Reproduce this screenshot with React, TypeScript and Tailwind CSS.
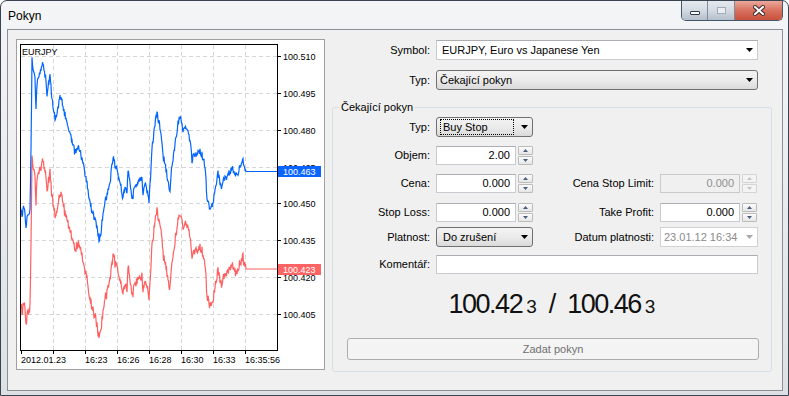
import React from 'react';

// Chart data: key points of the ask line in page coords (x, y)
const blueKeys: [number, number][] = [
  [20, 208], [22, 215], [24, 205], [26, 225], [28, 212], [30, 210], [31, 150], [32, 57], [33, 70], [35, 80],
  [36, 108], [37, 85], [39, 75], [41, 68], [43, 62], [44, 72], [46, 80], [47, 95], [48, 85], [50, 77],
  [52, 100], [54, 110], [55, 118], [57, 112], [60, 98], [62, 102], [65, 115], [68, 125], [72, 140], [75, 153],
  [78, 148], [80, 150], [82, 160], [85, 173], [88, 190], [90, 203], [92, 212], [95, 220], [97, 227], [99, 240],
  [101, 232], [102, 223], [104, 205], [107, 195], [110, 183], [112, 165], [113, 157], [115, 165], [117, 170], [118, 177],
  [121, 188], [123, 198], [125, 185], [127, 190], [128, 168], [130, 180], [132, 202], [134, 190], [137, 187], [140, 180],
  [142, 177], [143, 192], [145, 185], [147, 190], [149, 202], [150, 185], [152, 150], [153, 140], [155, 125], [157, 110],
  [158, 118], [160, 127], [162, 140], [163, 157], [165, 163], [167, 175], [170, 190], [171, 175], [173, 160], [175, 143],
  [177, 130], [179, 118], [180, 115], [182, 125], [183, 133], [185, 128], [187, 130], [189, 135], [190, 140], [192, 160],
  [194, 155], [197, 153], [200, 152], [202, 155], [204, 162], [205, 167], [207, 197], [210, 210], [212, 205], [213, 203],
  [215, 190], [217, 180], [218, 172], [220, 183], [222, 187], [224, 178], [227, 177], [230, 172], [233, 168], [235, 175],
  [238, 177], [240, 165], [243, 160], [244, 168], [246, 171.5],
];

function interp(keys: [number, number][], x: number) {
  for (let i = 0; i < keys.length - 1; i++) {
    const [x0, y0] = keys[i];
    const [x1, y1] = keys[i + 1];
    if (x >= x0 && x <= x1) return y0 + ((y1 - y0) * (x - x0)) / (x1 - x0 || 1);
  }
  return keys[keys.length - 1][1];
}

let seed = 12345;
const rnd = () => {
  seed = (seed * 16807) % 2147483647;
  return seed / 2147483647;
};

const bluePts: string[] = [];
const redPts: string[] = [];
for (let x = 20.5; x <= 246; x += 0.5) {
  const last = x >= 246;
  const b = last ? 171.5 : interp(blueKeys, x) + (rnd() - 0.5) * 7;
  const r = last ? 269 : Math.min(349, b + 97 + (rnd() - 0.5) * 6);
  bluePts.push(`${x},${b.toFixed(1)}`);
  redPts.push(`${x},${r.toFixed(1)}`);
}
bluePts.push('277,171.5');
redPts.push('277,269');

const priceLevels = ['100.510', '100.495', '100.480', '100.465', '100.450', '100.435', '100.420', '100.405'];
const gridY = priceLevels.map((_, i) => Math.round(56 + i * 36.86));
const gridX = [53, 85, 117, 149, 181, 213, 245];
const times: [number, string][] = [
  [21, '2012.01.23'],
  [85, '16:23'],
  [117, '16:26'],
  [149, '16:28'],
  [181, '16:30'],
  [213, '16:33'],
  [245, '16:35:56'],
];

const chartFont = 'Liberation Sans, Arial, sans-serif';

const Chart = () => (
  <div className="h-[331px] w-[309px] border border-[#a0a0a0] bg-white">
    <svg width="307" height="329" viewBox="17 40 307 329">
      {/* grid */}
      {gridY.map((y) => (
        <line key={`h${y}`} x1="21" x2="277" y1={y + 0.5} y2={y + 0.5} stroke="#d6d6d6" strokeDasharray="4 3" />
      ))}
      {gridX.map((x) => (
        <line key={`v${x}`} x1={x + 0.5} x2={x + 0.5} y1="45" y2="350" stroke="#d6d6d6" strokeDasharray="4 3" />
      ))}

      {/* price lines */}
      <polyline points={redPts.join(' ')} fill="none" stroke="#ff5f5f" strokeWidth="1.2" />
      <polyline points={bluePts.join(' ')} fill="none" stroke="#0064ff" strokeWidth="1.2" />

      {/* frame */}
      <rect x="20.5" y="44.5" width="257" height="306" fill="none" stroke="#000" />

      {/* price axis */}
      {gridY.map((y, i) => (
        <g key={`p${y}`}>
          <line x1="277" x2="281" y1={y + 0.5} y2={y + 0.5} stroke="#000" />
          <text x="283" y={y + 3.5} fontFamily={chartFont} fontSize="9" fill="#000">
            {priceLevels[i]}
          </text>
        </g>
      ))}

      {/* time axis */}
      <line x1="21.5" x2="21.5" y1="350" y2="354" stroke="#000" />
      {gridX.map((x) => (
        <line key={`t${x}`} x1={x + 0.5} x2={x + 0.5} y1="350" y2="354" stroke="#000" />
      ))}
      {times.map(([x, t]) => (
        <text key={t} x={x} y="363" fontFamily={chartFont} fontSize="9" fill="#000">
          {t}
        </text>
      ))}

      <text x="22" y="54.5" fontFamily={chartFont} fontSize="9" fill="#000">
        EURJPY
      </text>

      {/* current ask / bid tags */}
      <rect x="278" y="166" width="43" height="11" fill="#0a64ff" />
      <text x="283" y="175" fontFamily={chartFont} fontSize="9" fill="#fff">
        100.463
      </text>
      <rect x="278" y="264" width="43" height="11" fill="#ff6464" />
      <text x="283" y="273" fontFamily={chartFont} fontSize="9" fill="#fff">
        100.423
      </text>
    </svg>
  </div>
);

const Arrow = ({ color = '#000' }: { color?: string }) => (
  <svg width="7" height="4" viewBox="0 0 7 4">
    <path d="M0 0H7L3.5 4Z" fill={color} />
  </svg>
);

const Spinner = ({ disabled }: { disabled?: boolean }) => {
  const c = disabled ? '#c4c4c4' : '#4a5d7e';
  const box = disabled
    ? 'flex h-[9px] w-[15px] items-center justify-center rounded-[1px] border border-[#d4d4d4] bg-[#f4f4f4]'
    : 'flex h-[9px] w-[15px] items-center justify-center rounded-[1px] border border-[#bcbcbc] bg-gradient-to-b from-[#fcfcfc] to-[#e6e6e6]';
  return (
    <div className="flex h-[19px] flex-col gap-[1px]">
      <div className={box}>
        <svg width="5" height="3" viewBox="0 0 5 3">
          <path d="M2.5 0L5 3H0Z" fill={c} />
        </svg>
      </div>
      <div className={box}>
        <svg width="5" height="3" viewBox="0 0 5 3">
          <path d="M0 0H5L2.5 3Z" fill={c} />
        </svg>
      </div>
    </div>
  );
};

const NumField = ({ value, disabled }: { value: string; disabled?: boolean }) => (
  <div className="flex w-[97px] items-start gap-[2px]">
    <div
      className={
        disabled
          ? 'flex h-[19px] w-[80px] items-center justify-end border border-[#c9c9c9] bg-[#f0f0f0] pr-[5px] text-[#8e8e8e]'
          : 'flex h-[19px] w-[80px] items-center justify-end border border-[#c8ccd1] border-t-[#abadb3] bg-white pr-[5px]'
      }
    >
      {value}
    </div>
    <Spinner disabled={disabled} />
  </div>
);

const ComboBtn = ({ children, focus }: { children: React.ReactNode; focus?: boolean }) => (
  <div className="flex h-[20px] w-[97px] items-center justify-between rounded-[3px] border border-[#707070] bg-gradient-to-b from-[#f3f3f3] via-[#ebebeb] to-[#dadada] pl-[3px] pr-[4px]">
    {focus ? (
      <span className="flex h-[16px] w-[74px] items-center border border-dotted border-black pl-[2px]">{children}</span>
    ) : (
      <span className="pl-[3px]">{children}</span>
    )}
    <Arrow />
  </div>
);

const Label = ({ children }: { children: React.ReactNode }) => (
  <span className="w-[97px] shrink-0 text-right">{children}</span>
);

const RightLabel = ({ children }: { children: React.ReactNode }) => (
  <span className="w-[121px] shrink-0 text-right">{children}</span>
);

const TitleButtons = () => (
  <div className="mr-[5px] flex h-[20px] overflow-hidden rounded-b-[5px] border border-t-0 border-[#45576b]">
    <div className="flex w-[26px] items-center justify-center border-r border-[#7d8c9b] bg-gradient-to-b from-[#e4e9ee] via-[#d3dae2] to-[#b4bfcb]">
      <div className="mt-[5px] h-[4px] w-[10px] rounded-[1px] border border-[#2d3946] bg-white" />
    </div>
    <div className="flex w-[27px] items-center justify-center border-r border-[#7d8c9b] bg-gradient-to-b from-[#e4e9ee] via-[#d3dae2] to-[#b4bfcb]">
      <div className="h-[7px] w-[9px] border border-[#a2acb8] bg-[#e9edf1]" />
    </div>
    <div className="flex w-[47px] items-center justify-center bg-gradient-to-b from-[#e9a99b] via-[#d7705f] to-[#c8503c]">
      <svg width="12" height="11" viewBox="0 0 12 11">
        <path d="M2 2L10 9M10 2L2 9" stroke="#3b2a2a" strokeWidth="4" strokeLinecap="square" />
        <path d="M2 2L10 9M10 2L2 9" stroke="#fff" strokeWidth="2" strokeLinecap="square" />
      </svg>
    </div>
  </div>
);

export default function App() {
  return (
    <div className={`h-[396px] w-[789px] ${"font-['Liberation_Sans',Arial,sans-serif]"} text-[11px] leading-[13px] text-black`}>
      <div className="flex h-full w-full flex-col rounded-t-[7px] border border-[#3a4450] bg-gradient-to-b from-[#f4f5f6] via-[#e9ebed] to-[#dde1e4]">
        {/* title bar */}
        <div className="flex h-[28px] shrink-0 items-start justify-between">
          <span className="mt-[8px] pl-[7px] text-[12px] leading-[14px]">Pokyn</span>
          <TitleButtons />
        </div>

        {/* client area */}
        <div className="ml-[6px] mr-[5px] flex h-[362px] border border-[#8a9096] bg-[#f0f0f0] pl-[8px] pt-[9px]">
          <Chart />

          <div className="ml-[7px] flex w-[440px] flex-col">
            <div className="mt-[1px] flex h-[20px] items-center">
              <span className="w-[98px] shrink-0 text-right">Symbol:</span>
              <div className="ml-[6px] flex h-[20px] w-[322px] items-center justify-between border border-[#c8ccd1] border-t-[#abadb3] bg-white pl-[5px] pr-[4px]">
                <span>EURJPY, Euro vs Japanese Yen</span>
                <Arrow />
              </div>
            </div>

            <div className="mt-[10px] flex h-[20px] items-center">
              <span className="w-[98px] shrink-0 text-right">Typ:</span>
              <div className="ml-[6px] flex h-[20px] w-[322px] items-center justify-between rounded-[3px] border border-[#707070] bg-gradient-to-b from-[#f3f3f3] via-[#ebebeb] to-[#dadada] pl-[3px] pr-[4px]">
                <span>Čekající pokyn</span>
                <Arrow />
              </div>
            </div>

            <fieldset className="mt-[11px] flex w-[440px] flex-col rounded-[3px] border border-[#d5dfe5] pb-[11px]">
              <legend className="ml-[6px] px-[2px] leading-[13px]">Čekající pokyn</legend>

              <div className="mt-[3px] flex h-[20px] items-center">
                <Label>Typ:</Label>
                <div className="ml-[6px]">
                  <ComboBtn focus>Buy Stop</ComboBtn>
                </div>
              </div>

              <div className="mt-[8px] flex h-[20px] items-center">
                <Label>Objem:</Label>
                <div className="ml-[6px]">
                  <NumField value="2.00" />
                </div>
              </div>

              <div className="mt-[8px] flex h-[20px] items-center">
                <Label>Cena:</Label>
                <div className="ml-[6px]">
                  <NumField value="0.000" />
                </div>
                <RightLabel>Cena Stop Limit:</RightLabel>
                <div className="ml-[6px]">
                  <NumField value="0.000" disabled />
                </div>
              </div>

              <div className="mt-[9px] flex h-[20px] items-center">
                <Label>Stop Loss:</Label>
                <div className="ml-[6px]">
                  <NumField value="0.000" />
                </div>
                <RightLabel>Take Profit:</RightLabel>
                <div className="ml-[6px]">
                  <NumField value="0.000" />
                </div>
              </div>

              <div className="mt-[5px] flex h-[20px] items-center">
                <Label>Platnost:</Label>
                <div className="ml-[6px]">
                  <ComboBtn>Do zrušení</ComboBtn>
                </div>
                <RightLabel>Datum platnosti:</RightLabel>
                <div className="ml-[6px] flex h-[20px] w-[98px] items-center justify-between border border-[#d2d2d2] bg-white pl-[3px] pr-[4px] text-[#8a8a8a]">
                  <span>23.01.12 16:34</span>
                  <Arrow color="#a8a8a8" />
                </div>
              </div>

              <div className="mt-[7px] flex h-[20px] items-center">
                <Label>Komentář:</Label>
                <div className="ml-[6px] h-[19px] w-[322px] border border-[#c8ccd1] border-t-[#abadb3] bg-white" />
              </div>

              <div className="mt-[15px] flex h-[30px] items-baseline justify-center leading-[30px] text-[#111]">
                <span className="text-[27px] tracking-[-1.5px]">100.42</span>
                <span className="ml-[4px] text-[19px]">3</span>
                <span className="ml-[12px] mr-[11px] text-[27px]">/</span>
                <span className="text-[27px] tracking-[-1.5px]">100.46</span>
                <span className="ml-[4px] text-[19px]">3</span>
              </div>

              <div className="ml-[14px] mt-[19px] flex h-[22px] w-[412px] items-center justify-center rounded-[3px] border border-[#adadad] bg-[#f4f4f4] text-[#707070]">
                Zadat pokyn
              </div>
            </fieldset>
          </div>
        </div>
      </div>
    </div>
  );
}
